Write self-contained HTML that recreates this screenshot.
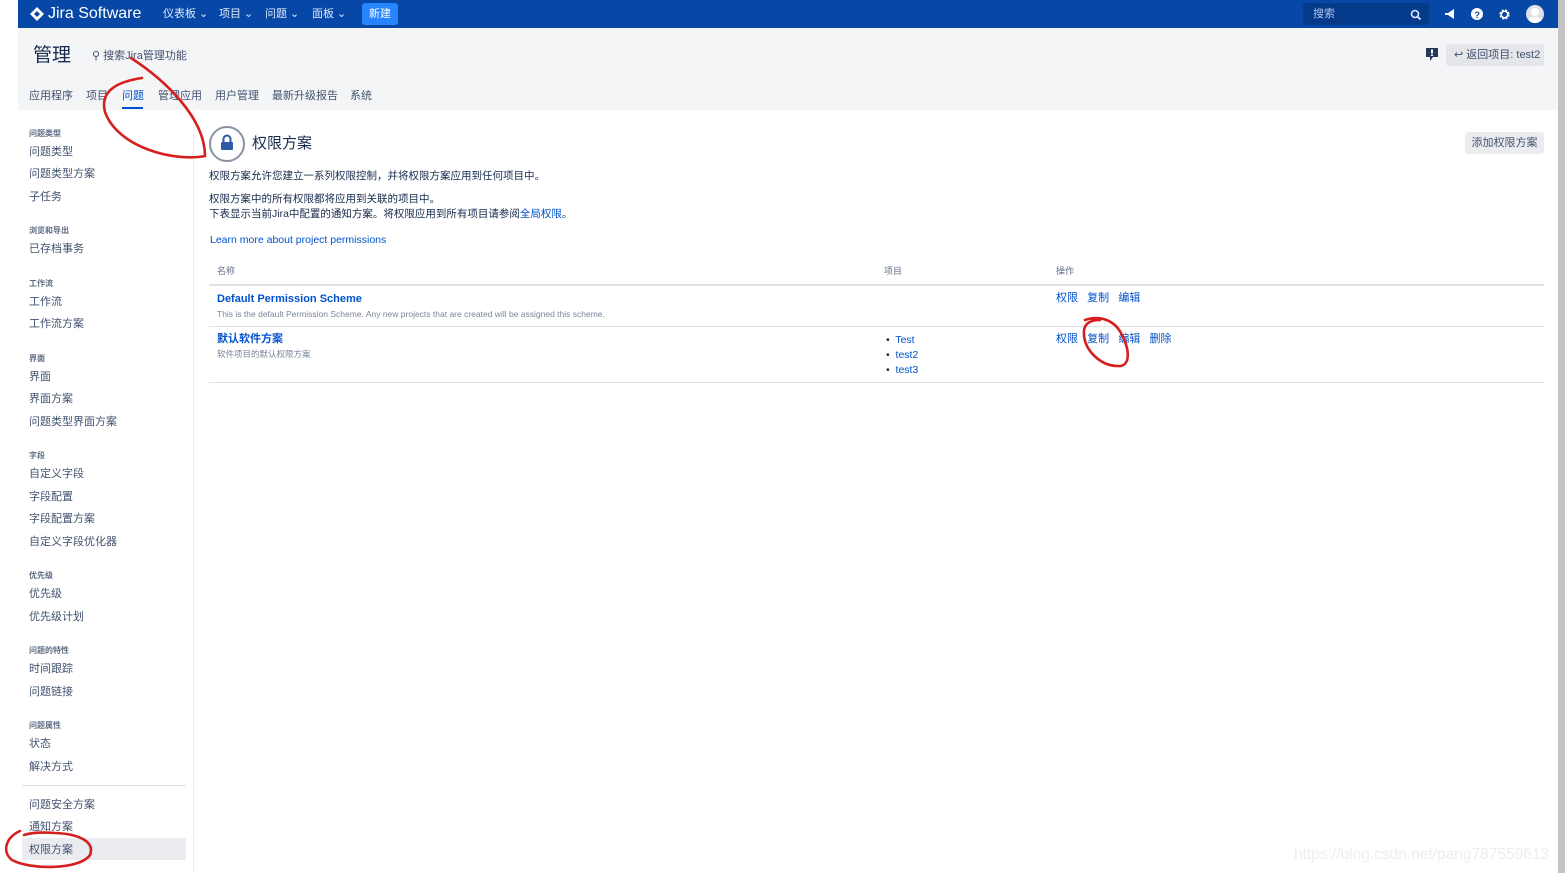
<!DOCTYPE html>
<html><head><meta charset="utf-8"><style>
*{margin:0;padding:0;box-sizing:border-box}
body{width:1565px;height:873px;overflow:hidden;background:#fff;font-family:"Liberation Sans","Noto Sans CJK SC",sans-serif;color:#172b4d;position:relative;font-size:11px}
.a{position:absolute;white-space:nowrap;line-height:1.15}
.top{left:18px;top:0;width:1540px;height:28px;background:#0747a6}
.hdr{left:18px;top:28px;width:1540px;height:82px;background:#f4f5f7}
.sb{left:1558px;top:0;width:7px;height:873px;background:#c4c4c4}
.nav{color:#deebff;font-size:11px;top:8px}
.side{left:29px;font-size:11px;color:#42526e}
.sh{left:29px;font-size:8px;color:#5e6c84;font-weight:bold}
.lk{color:#0052cc}
.tab{top:90px;font-size:11px;color:#42526e}
</style></head><body>
<div class="a top"></div>
<div class="a" style="left:30px;top:7px;width:13px;height:13px;"><svg width="14" height="14" viewBox="0 0 14 14"><path d="M7 0 L14 7 L7 14 L0 7Z" fill="#fff"/><path d="M7 4 L10 7 L7 10 L4 7Z" fill="#0747a6"/></svg></div>
<div class="a" style="left:48px;top:5px;color:#fff;font-size:16px">Jira Software</div>
<div class="a nav" style="left:163px">仪表板 ⌄</div>
<div class="a nav" style="left:219px">项目 ⌄</div>
<div class="a nav" style="left:265px">问题 ⌄</div>
<div class="a nav" style="left:312px">面板 ⌄</div>
<div class="a" style="left:362px;top:3px;width:36px;height:22px;background:#2684ff;border-radius:3px;color:#fff;font-size:11px;text-align:center;line-height:22px">新建</div>
<div class="a" style="left:1303px;top:3px;width:126px;height:22px;background:#053a8a;border-radius:3px;color:#b3c5e8;font-size:11px;padding-left:10px;line-height:22px">搜索</div>
<svg class="a" style="left:1410px;top:9px" width="12" height="12" viewBox="0 0 12 12"><circle cx="5" cy="5" r="3.5" stroke="#deebff" stroke-width="1.6" fill="none"/><path d="M7.5 7.5L10.5 10.5" stroke="#deebff" stroke-width="1.8"/></svg>
<svg class="a" style="left:1444px;top:8px" width="13" height="12" viewBox="0 0 13 12"><path d="M1 5h3l6-4v10l-6-4H1z" fill="#fff"/></svg>
<svg class="a" style="left:1471px;top:8px" width="12" height="12"><circle cx="6" cy="6" r="6" fill="#fff"/><text x="3.5" y="10" font-size="9" font-weight="bold" fill="#0747a6" font-family="Liberation Sans">?</text></svg>
<svg class="a" style="left:1498px;top:8px" width="13" height="13" viewBox="0 0 13 13"><circle cx="6.5" cy="6.5" r="4" stroke="#fff" stroke-width="2.2" fill="none" stroke-dasharray="2 1.2"/><circle cx="6.5" cy="6.5" r="3.2" stroke="#fff" stroke-width="1.5" fill="none"/></svg>
<div class="a" style="left:1526px;top:5px;width:18px;height:18px;border-radius:50%;background:#dfe1e6;overflow:hidden"><div style="position:absolute;left:5px;top:3px;width:8px;height:8px;border-radius:50%;background:#fff"></div><div style="position:absolute;left:2px;top:12px;width:14px;height:10px;border-radius:50%;background:#fff"></div></div>

<div class="a hdr"></div>
<div class="a" style="left:33px;top:45px;font-size:19px;color:#172b4d">管理</div>
<div class="a" style="left:92px;top:50px;font-size:11px;color:#42526e">⚲ 搜索Jira管理功能</div>
<div class="a tab" style="left:29px">应用程序</div>
<div class="a tab" style="left:86px">项目</div>
<div class="a tab" style="left:122px;color:#0052cc">问题</div>
<div class="a" style="left:122px;top:107px;width:21px;height:2px;background:#0052cc"></div>
<div class="a tab" style="left:158px">管理应用</div>
<div class="a tab" style="left:215px">用户管理</div>
<div class="a tab" style="left:272px">最新升级报告</div>
<div class="a tab" style="left:350px">系统</div>
<svg class="a" style="left:1426px;top:48px" width="12" height="14" viewBox="0 0 12 14"><path d="M0 0h12v9H7l-3 4V9H0z" fill="#253858"/><rect x="5" y="1.5" width="2" height="4" fill="#fff"/><rect x="5" y="6.5" width="2" height="1.5" fill="#fff"/></svg>
<div class="a" style="left:1446px;top:44px;width:98px;height:22px;background:#e4e6ea;border-radius:3px;font-size:11px;color:#42526e;line-height:22px;padding-left:8px">↩ 返回项目: test2</div>

<div class="a" style="left:193px;top:110px;width:1px;height:763px;background:#ebecf0"></div>
<div class="a sh" style="top:129px">问题类型</div>
<div class="a side" style="top:146px">问题类型</div>
<div class="a side" style="top:168px">问题类型方案</div>
<div class="a side" style="top:191px">子任务</div>
<div class="a sh" style="top:226px">浏览和导出</div>
<div class="a side" style="top:243px">已存档事务</div>
<div class="a sh" style="top:279px">工作流</div>
<div class="a side" style="top:296px">工作流</div>
<div class="a side" style="top:318px">工作流方案</div>
<div class="a sh" style="top:354px">界面</div>
<div class="a side" style="top:371px">界面</div>
<div class="a side" style="top:393px">界面方案</div>
<div class="a side" style="top:416px">问题类型界面方案</div>
<div class="a sh" style="top:451px">字段</div>
<div class="a side" style="top:468px">自定义字段</div>
<div class="a side" style="top:491px">字段配置</div>
<div class="a side" style="top:513px">字段配置方案</div>
<div class="a side" style="top:536px">自定义字段优化器</div>
<div class="a sh" style="top:571px">优先级</div>
<div class="a side" style="top:588px">优先级</div>
<div class="a side" style="top:611px">优先级计划</div>
<div class="a sh" style="top:646px">问题的特性</div>
<div class="a side" style="top:663px">时间跟踪</div>
<div class="a side" style="top:686px">问题链接</div>
<div class="a sh" style="top:721px">问题属性</div>
<div class="a side" style="top:738px">状态</div>
<div class="a side" style="top:761px">解决方式</div>
<div class="a" style="left:22px;top:785px;width:164px;height:1px;background:#dfe1e6"></div>
<div class="a side" style="top:799px">问题安全方案</div>
<div class="a side" style="top:821px">通知方案</div>
<div class="a" style="left:22px;top:838px;width:164px;height:22px;background:#ebecf0"></div>
<div class="a side" style="top:844px">权限方案</div>

<div class="a" style="left:209px;top:126px;width:36px;height:36px;border-radius:50%;border:2px solid #8993a4;background:#fff"></div>
<svg class="a" style="left:220px;top:134px" width="14" height="17" viewBox="0 0 14 17"><path d="M3.5 8V5a3.5 3.5 0 0 1 7 0v3" stroke="#2e5aa6" stroke-width="2" fill="none"/><rect x="1" y="8" width="12" height="8" rx="1" fill="#2e5aa6"/></svg>
<div class="a" style="left:252px;top:135px;font-size:15px;color:#172b4d">权限方案</div>
<div class="a" style="left:1465px;top:132px;width:79px;height:22px;background:#ebecf0;border-radius:3px;font-size:11px;color:#42526e;text-align:center;line-height:22px">添加权限方案</div>
<div class="a" style="left:209px;top:170px;font-size:10.5px">权限方案允许您建立一系列权限控制，并将权限方案应用到任何项目中。</div>
<div class="a" style="left:209px;top:193px;font-size:10.5px">权限方案中的所有权限都将应用到关联的项目中。</div>
<div class="a" style="left:209px;top:208px;font-size:10.5px">下表显示当前Jira中配置的通知方案。将权限应用到所有项目请参阅<span class="lk">全局权限</span>。</div>
<div class="a lk" style="left:210px;top:234px;font-size:10.5px">Learn more about project permissions</div>
<div class="a" style="left:217px;top:266px;font-size:9px;color:#5e6c84">名称</div>
<div class="a" style="left:884px;top:266px;font-size:9px;color:#5e6c84">项目</div>
<div class="a" style="left:1056px;top:266px;font-size:9px;color:#5e6c84">操作</div>
<div class="a" style="left:209px;top:284px;width:1335px;height:2px;background:#dfe1e6"></div>
<div class="a lk" style="left:217px;top:293px;font-size:11px;font-weight:bold">Default Permission Scheme</div>
<div class="a" style="left:217px;top:310px;font-size:8.5px;color:#7a869a">This is the default Permission Scheme. Any new projects that are created will be assigned this scheme.</div>
<div class="a lk" style="left:1056px;top:292px;font-size:11px">权限 &nbsp; 复制 &nbsp; 编辑</div>
<div class="a" style="left:209px;top:326px;width:1335px;height:1px;background:#dfe1e6"></div>
<div class="a lk" style="left:217px;top:333px;font-size:11px;font-weight:bold">默认软件方案</div>
<div class="a" style="left:217px;top:350px;font-size:8.5px;color:#7a869a">软件项目的默认权限方案</div>
<div class="a lk" style="left:886px;top:333px;font-size:10.5px;line-height:15px"><span style="color:#172b4d">•</span>&nbsp; Test<br><span style="color:#172b4d">•</span>&nbsp; test2<br><span style="color:#172b4d">•</span>&nbsp; test3</div>
<div class="a lk" style="left:1056px;top:333px;font-size:11px">权限 &nbsp; 复制 &nbsp; 编辑 &nbsp; 删除</div>
<div class="a" style="left:209px;top:382px;width:1335px;height:1px;background:#dfe1e6"></div>

<div class="a" style="left:1294px;top:846px;font-size:15.5px;color:#eeeeee">https://blog.csdn.net/pang787559613</div>
<div class="a sb"></div>

<svg class="a" style="left:0;top:0" width="1565" height="873" fill="none" stroke="#d61f1f" stroke-width="2.6" stroke-linecap="round">
<path d="M131 58 C165 80 205 118 205 156 C175 162 118 148 105 112 C100 92 115 82 142 78"/>
<path d="M1085 320 C1100 315 1115 320 1122 335 C1132 355 1128 367 1118 366 C1100 366 1085 350 1084 335 C1083 325 1088 320 1100 320"/>
<path d="M20 831 C5 838 2 852 12 860 C30 870 80 870 90 855 C95 842 80 834 55 833 C40 832 30 833 24 835"/>
</svg>
</body></html>
